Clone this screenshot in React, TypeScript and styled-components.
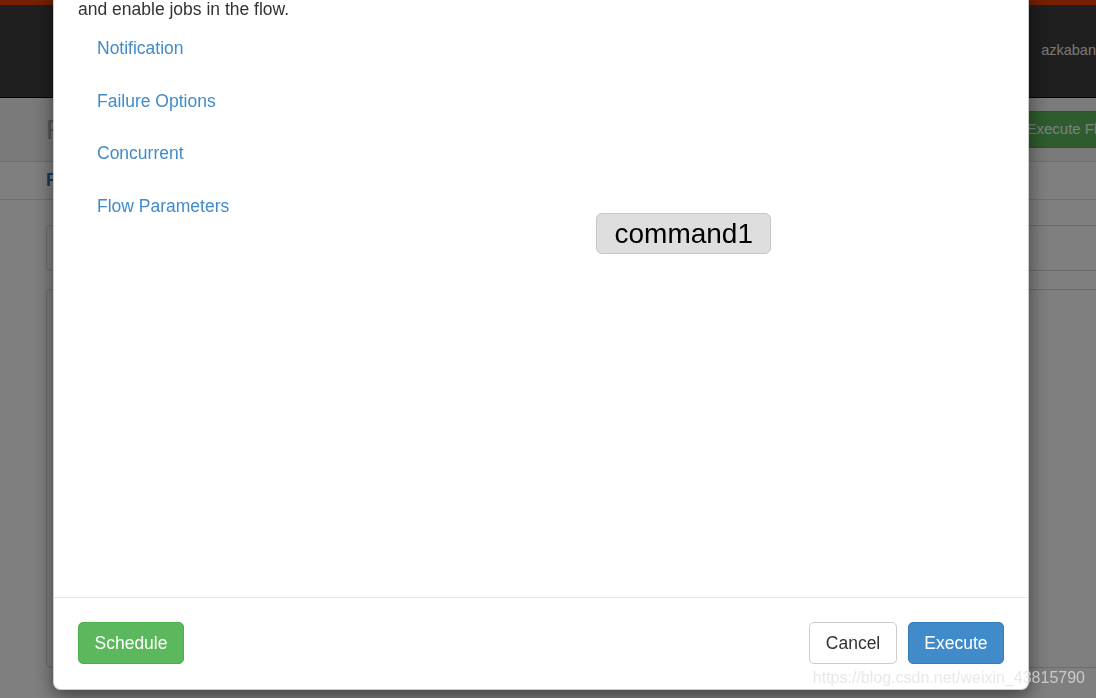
import React from "react";
import styled, { createGlobalStyle } from "styled-components";

const GlobalStyle = createGlobalStyle`
  html, body {
    margin: 0;
    padding: 0;
    overflow: hidden;
    background: #ffffff;
    font-family: "Liberation Sans", Arial, sans-serif;
    color: #333333;
  }
  * { box-sizing: border-box; }
`;

const Page = styled.div`
  width: 1170px;
  height: 698px;
  display: flex;
  flex-direction: column;
`;

const TopStripe = styled.div`
  height: 5px;
  background: #f04200;
`;

const NavBar = styled.div`
  height: 93px;
  background: #3e3e3e;
  border-bottom: 1px solid #000000;
  display: flex;
  align-items: center;
  justify-content: flex-end;
  padding: 0 74px 0 80px;
`;

const UserName = styled.span`
  font-size: 14.5px;
  color: #eeeeee;
  margin-top: -2px;
`;

const PageHeader = styled.div`
  height: 64px;
  background: #f5f5f5;
  border-bottom: 1px solid #dddddd;
  display: flex;
  align-items: center;
  justify-content: space-between;
  padding: 0 40px 0 46px;
`;

const Title = styled.h1`
  margin: 0;
  font-size: 28px;
  font-weight: normal;
  color: #aaaaaa;
`;

const SmallGreenButton = styled.button`
  font-family: inherit;
  font-size: 15px;
  line-height: 22.5px;
  padding: 6.25px 12.5px;
  border-radius: 4px;
  border: 1px solid #4cae4c;
  border-top-color: #5a8fd0;
  border-bottom-color: #5a8fd0;
  background: #5cb85c;
  color: #ffffff;
  margin-top: -1px;
`;

const TabBar = styled.div`
  height: 38px;
  border-bottom: 1px solid #dddddd;
  display: flex;
  align-items: center;
  padding-left: 46px;
`;

const ActiveTab = styled.span`
  font-size: 17.5px;
  font-weight: bold;
  color: #3276b1;
`;

const Content = styled.div`
  display: flex;
  flex-direction: column;
  gap: 18px;
  padding: 25px 22px 0 46px;
`;

const Panel = styled.div<{ $h: number }>`
  height: ${(p) => p.$h}px;
  border: 1px solid #d8d8d8;
  border-radius: 5px;
  background: #ffffff;
`;

const Backdrop = styled.div`
  position: fixed;
  inset: 0;
  background: rgba(0, 0, 0, 0.5);
  z-index: 10;
`;

const Dialog = styled.div`
  position: fixed;
  left: 53px;
  top: -55px;
  width: 976px;
  height: 745px;
  background: #ffffff;
  border: 1px solid rgba(0, 0, 0, 0.2);
  border-radius: 7.5px;
  box-shadow: 0 6px 19px rgba(0, 0, 0, 0.5);
  z-index: 20;
  display: flex;
  flex-direction: column;
`;

const DialogBody = styled.div`
  flex: 1;
  padding: 25px 24px;
  display: flex;
`;

const Sidebar = styled.div`
  width: 260px;
  display: flex;
  flex-direction: column;
`;

const HelpText = styled.p`
  margin: 1px 0 0;
  font-size: 17.5px;
  line-height: 25px;
  color: #333333;
  white-space: nowrap;
`;

const NavList = styled.ul`
  list-style: none;
  margin: 1.5px 0 0;
  padding: 0;
  display: flex;
  flex-direction: column;
  gap: 2.5px;
`;

const NavLink = styled.a`
  display: block;
  padding: 12.5px 19px;
  font-size: 17.5px;
  line-height: 25px;
  color: #428bca;
  text-decoration: none;
`;

const Graph = styled.div`
  flex: 1;
  position: relative;
`;

const JobNode = styled.div<{ $x: number; $y: number }>`
  position: absolute;
  left: ${(p) => p.$x}px;
  top: ${(p) => p.$y}px;
  height: 41px;
  padding: 0 17px 0 17.5px;
  display: flex;
  align-items: center;
  background: #dedede;
  border: 1.5px solid #c6c6c6;
  border-radius: 6px;
  font-size: 28px;
  color: #000000;
`;

const DialogFooter = styled.div`
  border-top: 1px solid #e5e5e5;
  padding: 24px 24px 25px;
  display: flex;
  align-items: center;
  gap: 11px;
`;

const Spacer = styled.div`
  flex: 1;
`;

const Button = styled.button<{ $variant: "success" | "default" | "primary" }>`
  height: 42px;
  font-family: inherit;
  font-size: 17.5px;
  line-height: 25px;
  padding: 0 15.5px;
  border-radius: 5px;
  cursor: pointer;
  border: 1.25px solid
    ${(p) =>
      p.$variant === "success" ? "#4cae4c" : p.$variant === "primary" ? "#357ebd" : "#cccccc"};
  background: ${(p) =>
    p.$variant === "success" ? "#5cb85c" : p.$variant === "primary" ? "#428bca" : "#ffffff"};
  color: ${(p) => (p.$variant === "default" ? "#333333" : "#ffffff")};
`;

const Watermark = styled.div`
  position: fixed;
  right: 11px;
  bottom: 11px;
  font-size: 16px;
  line-height: 18px;
  color: rgba(224, 224, 224, 0.75);
  z-index: 30;
  pointer-events: none;
`;

const navItems = ["Notification", "Failure Options", "Concurrent", "Flow Parameters"];

export default function App() {
  return (
    <>
      <GlobalStyle />
      <Page>
        <TopStripe />
        <NavBar>
          <UserName>azkaban</UserName>
        </NavBar>
        <PageHeader>
          <Title>Flow first</Title>
          <SmallGreenButton>Execute Flow</SmallGreenButton>
        </PageHeader>
        <TabBar>
          <ActiveTab>Flow View</ActiveTab>
        </TabBar>
        <Content>
          <Panel $h={46} />
          <Panel $h={379} />
        </Content>
      </Page>
      <Backdrop />
      <Dialog>
        <DialogBody>
          <Sidebar>
            <HelpText>
              Right click on the jobs to disable
              <br />
              and enable jobs in the flow.
            </HelpText>
            <NavList>
              {navItems.map((item) => (
                <li key={item}>
                  <NavLink href="#">{item}</NavLink>
                </li>
              ))}
            </NavList>
          </Sidebar>
          <Graph>
            <JobNode $x={258} $y={242}>command1</JobNode>
          </Graph>
        </DialogBody>
        <DialogFooter>
          <Button $variant="success">Schedule</Button>
          <Spacer />
          <Button $variant="default">Cancel</Button>
          <Button $variant="primary">Execute</Button>
        </DialogFooter>
      </Dialog>
      <Watermark>https://blog.csdn.net/weixin_43815790</Watermark>
    </>
  );
}
